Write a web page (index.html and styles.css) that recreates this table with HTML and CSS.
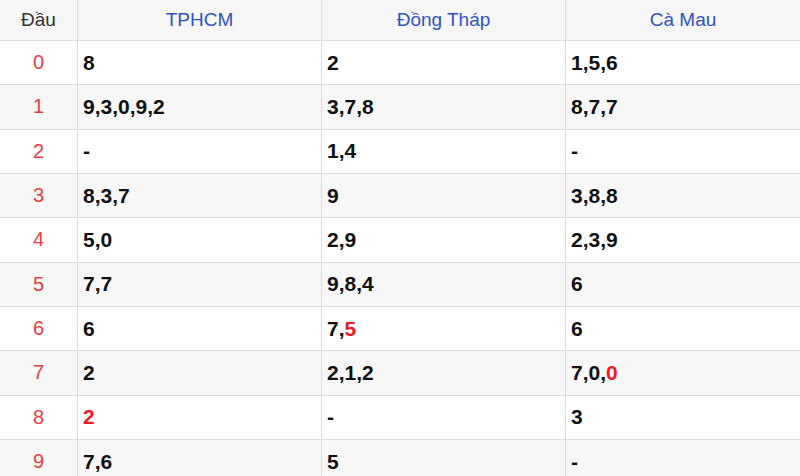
FILE: index.html
```html
<!DOCTYPE html>
<html lang="vi">
<head>
<meta charset="utf-8">
<title>Đầu đuôi</title>
<link rel="stylesheet" href="styles.css">
</head>
<body>
<div class="table">
  <div class="row head">
    <div class="cell c0">Đầu</div>
    <div class="cell h">TPHCM</div>
    <div class="cell h">Đồng Tháp</div>
    <div class="cell h last">Cà Mau</div>
  </div>
  <div class="row">
    <div class="cell c0">0</div>
    <div class="cell d">8</div>
    <div class="cell d">2</div>
    <div class="cell d last">1,5,6</div>
  </div>
  <div class="row alt">
    <div class="cell c0">1</div>
    <div class="cell d">9,3,0,9,2</div>
    <div class="cell d">3,7,8</div>
    <div class="cell d last">8,7,7</div>
  </div>
  <div class="row">
    <div class="cell c0">2</div>
    <div class="cell d">-</div>
    <div class="cell d">1,4</div>
    <div class="cell d last">-</div>
  </div>
  <div class="row alt">
    <div class="cell c0">3</div>
    <div class="cell d">8,3,7</div>
    <div class="cell d">9</div>
    <div class="cell d last">3,8,8</div>
  </div>
  <div class="row">
    <div class="cell c0">4</div>
    <div class="cell d">5,0</div>
    <div class="cell d">2,9</div>
    <div class="cell d last">2,3,9</div>
  </div>
  <div class="row alt">
    <div class="cell c0">5</div>
    <div class="cell d">7,7</div>
    <div class="cell d">9,8,4</div>
    <div class="cell d last">6</div>
  </div>
  <div class="row">
    <div class="cell c0">6</div>
    <div class="cell d">6</div>
    <div class="cell d">7,<span class="hl">5</span></div>
    <div class="cell d last">6</div>
  </div>
  <div class="row alt">
    <div class="cell c0">7</div>
    <div class="cell d">2</div>
    <div class="cell d">2,1,2</div>
    <div class="cell d last">7,0,<span class="hl">0</span></div>
  </div>
  <div class="row">
    <div class="cell c0">8</div>
    <div class="cell d"><span class="hl">2</span></div>
    <div class="cell d">-</div>
    <div class="cell d last">3</div>
  </div>
  <div class="row alt">
    <div class="cell c0">9</div>
    <div class="cell d">7,6</div>
    <div class="cell d">5</div>
    <div class="cell d last">-</div>
  </div>
</div>
</body>
</html>
```
FILE: styles.css
```css
html, body {
  margin: 0;
  padding: 0;
  background: #ffffff;
  overflow: hidden;
}
body {
  font-family: "Liberation Sans", Arial, sans-serif;
  width: 800px;
  height: 476px;
}
.table {
  display: flex;
  flex-direction: column;
  width: 800px;
}
.row {
  display: grid;
  grid-template-columns: 78px 244px 244px 1fr;
  height: 44.33px;
  background: #ffffff;
}
.row.alt {
  background: #f7f7f7;
}
.row.head {
  height: 41px;
  background: #f6f6f6;
}
.cell {
  box-sizing: border-box;
  border-right: 1px solid #dcdcdc;
  border-bottom: 1px solid #dcdcdc;
  display: flex;
  align-items: center;
  white-space: nowrap;
}
.cell.last {
  border-right: none;
}
.c0 {
  justify-content: center;
  color: #ee3b40;
  font-size: 20px;
}
.head .c0 {
  color: #333333;
  font-size: 19px;
}
.h {
  justify-content: center;
  color: #3053c4;
  font-size: 19px;
}
.d {
  padding-left: 5px;
  color: #111111;
  font-size: 21px;
  font-weight: bold;
}
.hl {
  color: #ec1c24;
}
```
